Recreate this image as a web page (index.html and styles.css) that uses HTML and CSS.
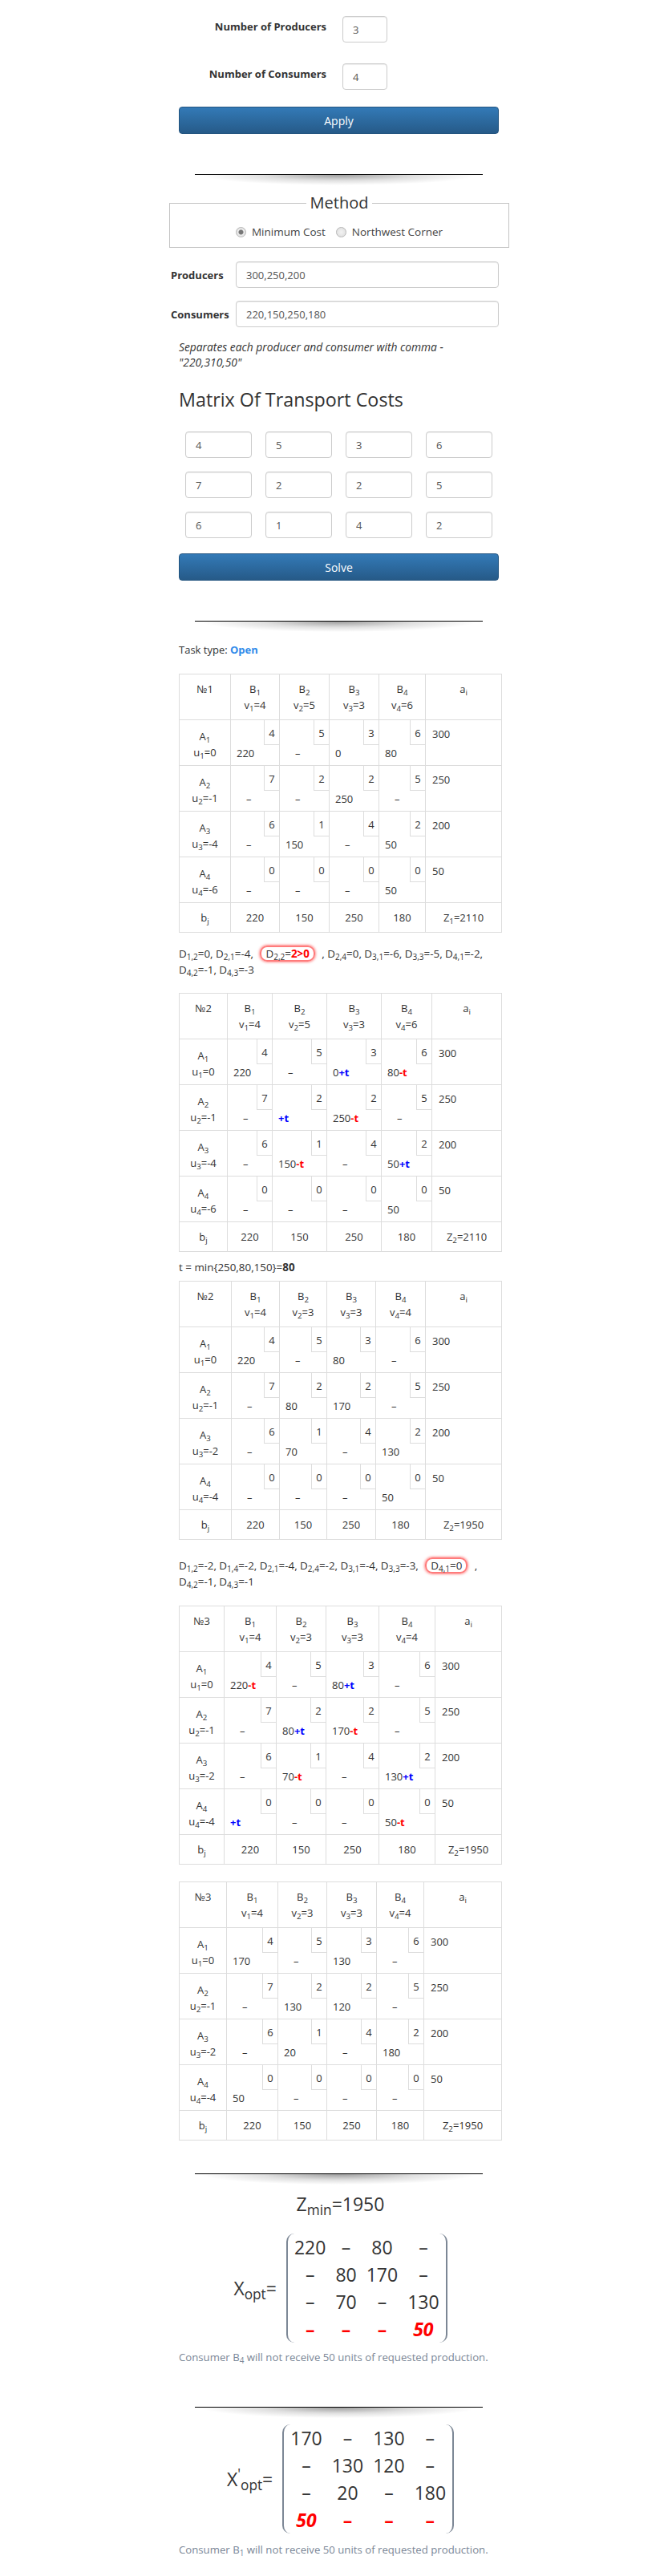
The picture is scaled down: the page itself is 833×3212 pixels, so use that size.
FILE: index.html
```html
<!DOCTYPE html>
<html>
<head>
<meta charset="utf-8">
<link rel="stylesheet" href="styles.css">
</head>
<body>
<div class="page">
  <div class="setup">
    <div class="count-row"><label class="count-label">Number of Producers</label><input class="input count-input" value="3"></div>
    <div class="count-row"><label class="count-label">Number of Consumers</label><input class="input count-input" value="4"></div>
    <button class="btn apply">Apply</button>
  </div>

  <div class="divider d1"></div>

  <fieldset class="method">
    <legend>Method</legend>
    <div class="radios">
      <label class="radio"><input type="radio" name="m" checked><span>Minimum Cost</span></label>
      <label class="radio"><input type="radio" name="m"><span>Northwest Corner</span></label>
    </div>
  </fieldset>

  <div class="field-row first"><label>Producers</label><input class="input wide" value="300,250,200"></div>
  <div class="field-row"><label>Consumers</label><input class="input wide" value="220,150,250,180"></div>
  <p class="help">Separates each producer and consumer with comma -<br>"220,310,50"</p>

  <h2 class="matrix-title">Matrix Of Transport Costs</h2>
  <div class="cost-grid">
    <input class="input" value="4"><input class="input" value="5"><input class="input" value="3"><input class="input" value="6">
    <input class="input" value="7"><input class="input" value="2"><input class="input" value="2"><input class="input" value="5">
    <input class="input" value="6"><input class="input" value="1"><input class="input" value="4"><input class="input" value="2">
  </div>
  <button class="btn solve">Solve</button>

  <div class="divider d2"></div>

  <p class="task">Task type: <b class="open">Open</b></p>

  <table class="tt t1">
    <colgroup><col class="w64"><col class="w61"><col class="w62"><col class="w62"><col class="w58"><col></colgroup>
    <tr class="head"><td>№1</td><td>B<sub>1</sub><br>v<sub>1</sub>=4</td><td>B<sub>2</sub><br>v<sub>2</sub>=5</td><td>B<sub>3</sub><br>v<sub>3</sub>=3</td><td>B<sub>4</sub><br>v<sub>4</sub>=6</td><td>a<sub>i</sub></td></tr>
    <tr><td class="rl">A<sub>1</sub><br>u<sub>1</sub>=0</td><td class="c"><div class="cost">4</div><div class="val">220</div></td><td class="c"><div class="cost">5</div><div class="val dash">–</div></td><td class="c"><div class="cost">3</div><div class="val">0</div></td><td class="c"><div class="cost">6</div><div class="val">80</div></td><td class="ai">300</td></tr>
    <tr><td class="rl">A<sub>2</sub><br>u<sub>2</sub>=-1</td><td class="c"><div class="cost">7</div><div class="val dash">–</div></td><td class="c"><div class="cost">2</div><div class="val dash">–</div></td><td class="c"><div class="cost">2</div><div class="val">250</div></td><td class="c"><div class="cost">5</div><div class="val dash">–</div></td><td class="ai">250</td></tr>
    <tr><td class="rl">A<sub>3</sub><br>u<sub>3</sub>=-4</td><td class="c"><div class="cost">6</div><div class="val dash">–</div></td><td class="c"><div class="cost">1</div><div class="val">150</div></td><td class="c"><div class="cost">4</div><div class="val dash">–</div></td><td class="c"><div class="cost">2</div><div class="val">50</div></td><td class="ai">200</td></tr>
    <tr><td class="rl">A<sub>4</sub><br>u<sub>4</sub>=-6</td><td class="c"><div class="cost">0</div><div class="val dash">–</div></td><td class="c"><div class="cost">0</div><div class="val dash">–</div></td><td class="c"><div class="cost">0</div><div class="val dash">–</div></td><td class="c"><div class="cost">0</div><div class="val">50</div></td><td class="ai">50</td></tr>
    <tr class="foot"><td>b<sub>j</sub></td><td>220</td><td>150</td><td>250</td><td>180</td><td>Z<sub>1</sub>=2110</td></tr>
  </table>

  <p class="dline dl1">D<sub>1,2</sub>=0, D<sub>2,1</sub>=-4, <span class="hl">D<sub>2,2</sub>=<b class="red">2&gt;0</b></span> , D<sub>2,4</sub>=0, D<sub>3,1</sub>=-6, D<sub>3,3</sub>=-5, D<sub>4,1</sub>=-2,<br>D<sub>4,2</sub>=-1, D<sub>4,3</sub>=-3</p>

  <table class="tt t2">
    <colgroup><col class="w60"><col class="w56"><col class="w68"><col class="w68"><col class="w63"><col></colgroup>
    <tr class="head"><td>№2</td><td>B<sub>1</sub><br>v<sub>1</sub>=4</td><td>B<sub>2</sub><br>v<sub>2</sub>=5</td><td>B<sub>3</sub><br>v<sub>3</sub>=3</td><td>B<sub>4</sub><br>v<sub>4</sub>=6</td><td>a<sub>i</sub></td></tr>
    <tr><td class="rl">A<sub>1</sub><br>u<sub>1</sub>=0</td><td class="c"><div class="cost">4</div><div class="val">220</div></td><td class="c"><div class="cost">5</div><div class="val dash">–</div></td><td class="c"><div class="cost">3</div><div class="val">0<b class="plus">+t</b></div></td><td class="c"><div class="cost">6</div><div class="val">80<b class="minus">-t</b></div></td><td class="ai">300</td></tr>
    <tr><td class="rl">A<sub>2</sub><br>u<sub>2</sub>=-1</td><td class="c"><div class="cost">7</div><div class="val dash">–</div></td><td class="c"><div class="cost">2</div><div class="val"><b class="plus">+t</b></div></td><td class="c"><div class="cost">2</div><div class="val">250<b class="minus">-t</b></div></td><td class="c"><div class="cost">5</div><div class="val dash">–</div></td><td class="ai">250</td></tr>
    <tr><td class="rl">A<sub>3</sub><br>u<sub>3</sub>=-4</td><td class="c"><div class="cost">6</div><div class="val dash">–</div></td><td class="c"><div class="cost">1</div><div class="val">150<b class="minus">-t</b></div></td><td class="c"><div class="cost">4</div><div class="val dash">–</div></td><td class="c"><div class="cost">2</div><div class="val">50<b class="plus">+t</b></div></td><td class="ai">200</td></tr>
    <tr><td class="rl">A<sub>4</sub><br>u<sub>4</sub>=-6</td><td class="c"><div class="cost">0</div><div class="val dash">–</div></td><td class="c"><div class="cost">0</div><div class="val dash">–</div></td><td class="c"><div class="cost">0</div><div class="val dash">–</div></td><td class="c"><div class="cost">0</div><div class="val">50</div></td><td class="ai">50</td></tr>
    <tr class="foot"><td>b<sub>j</sub></td><td>220</td><td>150</td><td>250</td><td>180</td><td>Z<sub>2</sub>=2110</td></tr>
  </table>

  <p class="tline">t = min{250,80,150}=<b>80</b></p>

  <table class="tt t3">
    <colgroup><col class="w65"><col class="w60"><col class="w59"><col class="w61"><col class="w62"><col></colgroup>
    <tr class="head"><td>№2</td><td>B<sub>1</sub><br>v<sub>1</sub>=4</td><td>B<sub>2</sub><br>v<sub>2</sub>=3</td><td>B<sub>3</sub><br>v<sub>3</sub>=3</td><td>B<sub>4</sub><br>v<sub>4</sub>=4</td><td>a<sub>i</sub></td></tr>
    <tr><td class="rl">A<sub>1</sub><br>u<sub>1</sub>=0</td><td class="c"><div class="cost">4</div><div class="val">220</div></td><td class="c"><div class="cost">5</div><div class="val dash">–</div></td><td class="c"><div class="cost">3</div><div class="val">80</div></td><td class="c"><div class="cost">6</div><div class="val dash">–</div></td><td class="ai">300</td></tr>
    <tr><td class="rl">A<sub>2</sub><br>u<sub>2</sub>=-1</td><td class="c"><div class="cost">7</div><div class="val dash">–</div></td><td class="c"><div class="cost">2</div><div class="val">80</div></td><td class="c"><div class="cost">2</div><div class="val">170</div></td><td class="c"><div class="cost">5</div><div class="val dash">–</div></td><td class="ai">250</td></tr>
    <tr><td class="rl">A<sub>3</sub><br>u<sub>3</sub>=-2</td><td class="c"><div class="cost">6</div><div class="val dash">–</div></td><td class="c"><div class="cost">1</div><div class="val">70</div></td><td class="c"><div class="cost">4</div><div class="val dash">–</div></td><td class="c"><div class="cost">2</div><div class="val">130</div></td><td class="ai">200</td></tr>
    <tr><td class="rl">A<sub>4</sub><br>u<sub>4</sub>=-4</td><td class="c"><div class="cost">0</div><div class="val dash">–</div></td><td class="c"><div class="cost">0</div><div class="val dash">–</div></td><td class="c"><div class="cost">0</div><div class="val dash">–</div></td><td class="c"><div class="cost">0</div><div class="val">50</div></td><td class="ai">50</td></tr>
    <tr class="foot"><td>b<sub>j</sub></td><td>220</td><td>150</td><td>250</td><td>180</td><td>Z<sub>2</sub>=1950</td></tr>
  </table>

  <p class="dline dl2">D<sub>1,2</sub>=-2, D<sub>1,4</sub>=-2, D<sub>2,1</sub>=-4, D<sub>2,4</sub>=-2, D<sub>3,1</sub>=-4, D<sub>3,3</sub>=-3, <span class="hl">D<sub>4,1</sub>=0</span> ,<br>D<sub>4,2</sub>=-1, D<sub>4,3</sub>=-1</p>

  <table class="tt t4">
    <colgroup><col class="w56"><col class="w65"><col class="w62"><col class="w66"><col class="w70"><col></colgroup>
    <tr class="head"><td>№3</td><td>B<sub>1</sub><br>v<sub>1</sub>=4</td><td>B<sub>2</sub><br>v<sub>2</sub>=3</td><td>B<sub>3</sub><br>v<sub>3</sub>=3</td><td>B<sub>4</sub><br>v<sub>4</sub>=4</td><td>a<sub>i</sub></td></tr>
    <tr><td class="rl">A<sub>1</sub><br>u<sub>1</sub>=0</td><td class="c"><div class="cost">4</div><div class="val">220<b class="minus">-t</b></div></td><td class="c"><div class="cost">5</div><div class="val dash">–</div></td><td class="c"><div class="cost">3</div><div class="val">80<b class="plus">+t</b></div></td><td class="c"><div class="cost">6</div><div class="val dash">–</div></td><td class="ai">300</td></tr>
    <tr><td class="rl">A<sub>2</sub><br>u<sub>2</sub>=-1</td><td class="c"><div class="cost">7</div><div class="val dash">–</div></td><td class="c"><div class="cost">2</div><div class="val">80<b class="plus">+t</b></div></td><td class="c"><div class="cost">2</div><div class="val">170<b class="minus">-t</b></div></td><td class="c"><div class="cost">5</div><div class="val dash">–</div></td><td class="ai">250</td></tr>
    <tr><td class="rl">A<sub>3</sub><br>u<sub>3</sub>=-2</td><td class="c"><div class="cost">6</div><div class="val dash">–</div></td><td class="c"><div class="cost">1</div><div class="val">70<b class="minus">-t</b></div></td><td class="c"><div class="cost">4</div><div class="val dash">–</div></td><td class="c"><div class="cost">2</div><div class="val">130<b class="plus">+t</b></div></td><td class="ai">200</td></tr>
    <tr><td class="rl">A<sub>4</sub><br>u<sub>4</sub>=-4</td><td class="c"><div class="cost">0</div><div class="val"><b class="plus">+t</b></div></td><td class="c"><div class="cost">0</div><div class="val dash">–</div></td><td class="c"><div class="cost">0</div><div class="val dash">–</div></td><td class="c"><div class="cost">0</div><div class="val">50<b class="minus">-t</b></div></td><td class="ai">50</td></tr>
    <tr class="foot"><td>b<sub>j</sub></td><td>220</td><td>150</td><td>250</td><td>180</td><td>Z<sub>2</sub>=1950</td></tr>
  </table>

  <table class="tt t5">
    <colgroup><col class="w59"><col class="w64"><col class="w61"><col class="w62"><col class="w59"><col></colgroup>
    <tr class="head"><td>№3</td><td>B<sub>1</sub><br>v<sub>1</sub>=4</td><td>B<sub>2</sub><br>v<sub>2</sub>=3</td><td>B<sub>3</sub><br>v<sub>3</sub>=3</td><td>B<sub>4</sub><br>v<sub>4</sub>=4</td><td>a<sub>i</sub></td></tr>
    <tr><td class="rl">A<sub>1</sub><br>u<sub>1</sub>=0</td><td class="c"><div class="cost">4</div><div class="val">170</div></td><td class="c"><div class="cost">5</div><div class="val dash">–</div></td><td class="c"><div class="cost">3</div><div class="val">130</div></td><td class="c"><div class="cost">6</div><div class="val dash">–</div></td><td class="ai">300</td></tr>
    <tr><td class="rl">A<sub>2</sub><br>u<sub>2</sub>=-1</td><td class="c"><div class="cost">7</div><div class="val dash">–</div></td><td class="c"><div class="cost">2</div><div class="val">130</div></td><td class="c"><div class="cost">2</div><div class="val">120</div></td><td class="c"><div class="cost">5</div><div class="val dash">–</div></td><td class="ai">250</td></tr>
    <tr><td class="rl">A<sub>3</sub><br>u<sub>3</sub>=-2</td><td class="c"><div class="cost">6</div><div class="val dash">–</div></td><td class="c"><div class="cost">1</div><div class="val">20</div></td><td class="c"><div class="cost">4</div><div class="val dash">–</div></td><td class="c"><div class="cost">2</div><div class="val">180</div></td><td class="ai">200</td></tr>
    <tr><td class="rl">A<sub>4</sub><br>u<sub>4</sub>=-4</td><td class="c"><div class="cost">0</div><div class="val">50</div></td><td class="c"><div class="cost">0</div><div class="val dash">–</div></td><td class="c"><div class="cost">0</div><div class="val dash">–</div></td><td class="c"><div class="cost">0</div><div class="val dash">–</div></td><td class="ai">50</td></tr>
    <tr class="foot"><td>b<sub>j</sub></td><td>220</td><td>150</td><td>250</td><td>180</td><td>Z<sub>2</sub>=1950</td></tr>
  </table>

  <div class="divider d3"></div>

  <p class="zmin">Z<sub>min</sub>=1950</p>

  <div class="result r1">
    <span class="xlabel">X<sub>opt</sub>=</span>
    <div class="bracket">
      <table class="mat">
        <tr><td>220</td><td>–</td><td>80</td><td>–</td></tr>
        <tr><td>–</td><td>80</td><td>170</td><td>–</td></tr>
        <tr><td>–</td><td>70</td><td>–</td><td>130</td></tr>
        <tr class="lost"><td>–</td><td>–</td><td>–</td><td><i>50</i></td></tr>
      </table>
    </div>
  </div>
  <p class="note n1">Consumer B<sub>4</sub> will not receive 50 units of requested production.</p>

  <div class="divider d4"></div>

  <div class="result r2">
    <span class="xlabel">X<sup>'</sup><sub>opt</sub>=</span>
    <div class="bracket">
      <table class="mat">
        <tr><td>170</td><td>–</td><td>130</td><td>–</td></tr>
        <tr><td>–</td><td>130</td><td>120</td><td>–</td></tr>
        <tr><td>–</td><td>20</td><td>–</td><td>180</td></tr>
        <tr class="lost"><td><i>50</i></td><td>–</td><td>–</td><td>–</td></tr>
      </table>
    </div>
  </div>
  <p class="note n2">Consumer B<sub>1</sub> will not receive 50 units of requested production.</p>
</div>
</body>
</html>
```

FILE: styles.css
```css
html, body { margin: 0; padding: 0; background: #fff; }
body {
  font-family: "Open Sans", "DejaVu Sans", sans-serif;
  font-size: 13px;
  line-height: 20px;
  color: #333;
}
sub { font-size: 75%; line-height: 0; position: relative; vertical-align: baseline; bottom: -0.3em; }
sup { font-size: 75%; line-height: 0; position: relative; vertical-align: baseline; top: -0.5em; }
p { margin: 0; }

.page { width: 403px; margin-left: 223px; padding-bottom: 20px; }

/* inputs & buttons */
.input {
  box-sizing: border-box;
  height: 33px;
  border: 1px solid #ccc;
  border-radius: 4px;
  box-shadow: inset 0 1px 1px rgba(0,0,0,.075);
  padding: 0 12px;
  font-family: inherit;
  font-size: 13px;
  color: #555;
  background: #fff;
  outline: none;
}
.btn {
  display: block;
  box-sizing: border-box;
  width: 399px;
  height: 34px;
  border: 1px solid #245580;
  border-radius: 4px;
  background: linear-gradient(to bottom, #337ab7 0%, #265a88 100%);
  color: #fff;
  font-family: inherit;
  font-size: 14px;
  padding: 0;
}

/* setup */
.setup { padding-top: 20px; }
.count-row {
  display: grid;
  grid-template-columns: 184px 56px;
  column-gap: 20px;
  align-items: start;
}
.count-row + .count-row { margin-top: 26px; }
.count-label {
  text-align: right;
  font-weight: bold;
  padding-top: 3px;
  line-height: 20px;
}
.count-input { width: 56px; }
.apply { margin-top: 21px; }

/* divider with soft shadow */
.divider {
  position: relative;
  width: 359px;
  height: 1px;
  margin-left: 20px;
  background: #000;
}
.divider::after {
  content: "";
  position: absolute;
  left: 0;
  right: 0;
  top: 1px;
  height: 13px;
  background: radial-gradient(ellipse 48% 100% at 50% 0, rgba(0,0,0,.38), rgba(0,0,0,.12) 55%, rgba(0,0,0,0) 100%);
}
.d1 { margin-top: 50px; }
.d2 { margin-top: 50px; }
.d3 { margin-top: 41px; }
.d4 { margin-top: 52px; }

/* method */
.method {
  margin: 23px -9px 0 -12px;
  padding: 14px 0 9px;
  border: 1px solid #c4c4c4;
}
.method legend {
  margin: 0 auto;
  padding: 0 5px;
  font-size: 20px;
  line-height: 24px;
  color: #333;
}
.radios {
  display: flex;
  justify-content: center;
  gap: 13px;
  font-size: 13.5px;
  line-height: 20px;
  color: #444;
}
.radio {
  display: inline-flex;
  align-items: center;
  gap: 7px;
}
.radio input {
  appearance: none;
  -webkit-appearance: none;
  margin: 0;
  width: 13px;
  height: 13px;
  border-radius: 50%;
  border: 1px solid #b5b5b5;
  box-sizing: border-box;
  background: radial-gradient(circle, #f2f2f2 0, #dcdcdc 100%);
}
.radio input:checked {
  background: radial-gradient(circle, #777 0, #777 2.5px, #ececec 3.5px, #dadada 100%);
}

/* producers / consumers */
.field-row {
  display: flex;
  align-items: center;
  margin-left: -10px;
}
.field-row.first { margin-top: 17px; }
.field-row + .field-row { margin-top: 16px; }
.field-row label { width: 81px; font-weight: bold; }
.wide { width: 328px; }
.help {
  margin-top: 15px;
  font-style: italic;
  font-size: 13.8px;
  line-height: 19px;
}

.matrix-title {
  margin: 22px 0 0;
  font-size: 23.3px;
  line-height: 30px;
  font-weight: normal;
  color: #333;
}
.cost-grid {
  margin-top: 25px;
  padding-left: 8px;
  display: grid;
  grid-template-columns: repeat(4, 83px);
  column-gap: 17px;
  row-gap: 17px;
}
.cost-grid .input { width: 83px; }
.solve { margin-top: 19px; }

.task { margin-top: 25px; }
.open { color: #2f8bea; }

/* transport tables */
.tt {
  width: 403px;
  table-layout: fixed;
  border-collapse: collapse;
  margin-top: 20px;
}
.tt td {
  border: 1px solid #ddd;
  padding: 8px;
  vertical-align: top;
  text-align: center;
  line-height: 20px;
}
.tt .rl { padding-top: 10px; padding-bottom: 6px; }
.tt .ai { text-align: left; padding-top: 7px; }
.tt td.c { padding: 0 0 5px 0; text-align: left; }
.cost {
  box-sizing: border-box;
  width: 19px;
  height: 31px;
  margin-left: auto;
  border-left: 1px solid #ddd;
  border-bottom: 1px solid #ddd;
  text-align: center;
  line-height: 32px;
}
.val {
  height: 20px;
  line-height: 20px;
  padding-left: 7px;
  white-space: nowrap;
}
.val.dash { padding-left: 19px; }
.plus { color: #00f; }
.minus { color: #f00; }

.w56 { width: 56px; } .w58 { width: 58px; } .w59 { width: 59px; }
.w60 { width: 60px; } .w61 { width: 61px; } .w62 { width: 62px; }
.w63 { width: 63px; } .w64 { width: 64px; } .w65 { width: 65px; }
.w66 { width: 66px; } .w68 { width: 68px; } .w70 { width: 70px; }

.t2 { margin-top: 19px; }
.t3 { margin-top: 8px; }
.t4 { margin-top: 20px; }
.t5 { margin-top: 21px; }

.dline { font-size: 13.4px; line-height: 20px; }
.dl1 { margin-top: 16px; }
.dl2 { margin-top: 22px; }
.hl {
  display: inline-block;
  line-height: 16px;
  padding: 0 5px;
  margin: 0 5px;
  border: 2px solid #ff7b7b;
  border-radius: 9px;
  box-shadow: 0 0 3px 1px rgba(255, 60, 60, .55);
}
.red { color: #f00; }

.tline {
  margin-top: 10px;
  font-size: 13.4px;
  line-height: 18px;
}

/* results */
.zmin {
  margin-top: 22px;
  text-align: center;
  font-size: 23px;
  line-height: 30px;
}
.result {
  display: flex;
  justify-content: center;
  align-items: center;
  font-size: 23px;
}
.r1 { margin-top: 22px; }
.r2 { margin-top: 21px; }
.xlabel { margin-right: 12px; line-height: 30px; }
.bracket {
  border-left: 2px solid #7c8795;
  border-right: 2px solid #7c8795;
  border-radius: 10px;
  padding: 0 2px;
}
.mat { border-collapse: collapse; }
.mat td {
  padding: 0 6px;
  text-align: center;
  line-height: 34px;
  white-space: nowrap;
}
.lost td { color: #f00; font-weight: bold; }
.note {
  text-align: left;
  color: #7b8797;
  font-size: 13.2px;
  line-height: 20px;
}
.n1 { margin-top: 8px; }
.n2 { margin-top: 10px; }
```
